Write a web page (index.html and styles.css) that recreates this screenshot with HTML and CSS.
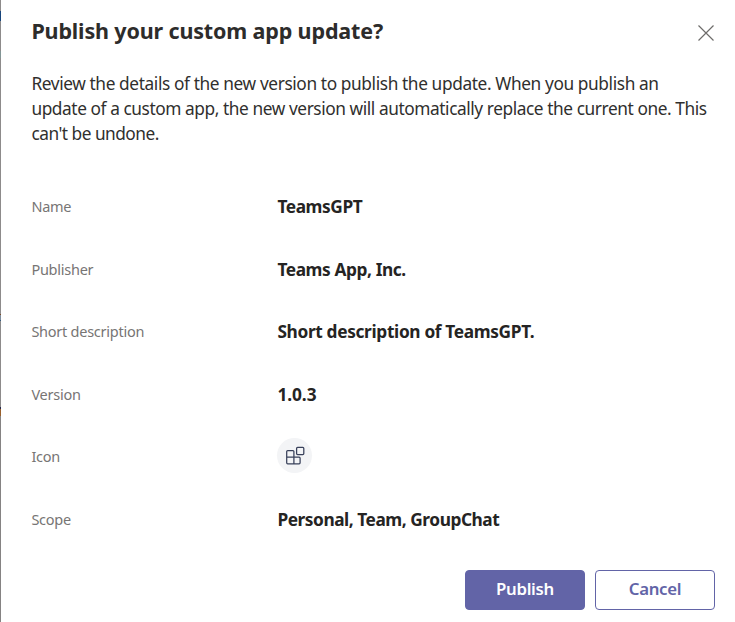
FILE: index.html
```html
<!DOCTYPE html>
<html lang="en">
<head>
<meta charset="utf-8">
<title>Publish your custom app update?</title>
<link rel="stylesheet" href="styles.css">
</head>
<body>
<main class="dialog">
  <header class="header">
    <h1 class="title">Publish your custom app update?</h1>
    <button class="close" aria-label="Close">
      <svg width="16" height="16" viewBox="0 0 16 16"><path d="M.5.5 15.5 15.5M15.5.5.5 15.5" fill="none" stroke="#6e6c6a" stroke-width="1.2"/></svg>
    </button>
  </header>
  <p class="intro"><span class="l1">Review the details of the new version to publish the update. When you publish an</span><br><span class="l2">update of a custom app, the new version will automatically replace the current one. This</span><br><span class="l3">can't be undone.</span></p>
  <dl class="details">
    <div class="row"><dt>Name</dt><dd>TeamsGPT</dd></div>
    <div class="row"><dt>Publisher</dt><dd>Teams App, Inc.</dd></div>
    <div class="row"><dt>Short description</dt><dd class="v-desc">Short description of TeamsGPT.</dd></div>
    <div class="row"><dt>Version</dt><dd class="v-version">1.0.3</dd></div>
    <div class="row"><dt>Icon</dt><dd><span class="app-icon">
      <svg width="20" height="20" viewBox="0 0 20 20" fill="none" stroke="#38405a" stroke-width="1.25"><path d="M8.9 11.2V5.6a1 1 0 0 0-1-1H2.7a1 1 0 0 0-1 1v11.2a1 1 0 0 0 1 1h11.4a1 1 0 0 0 1-1v-4.6a1 1 0 0 0-1-1H1.7M8.9 11.2v6.6"/><rect x="11.6" y="1.4" width="7.2" height="7.2" rx="1"/></svg>
    </span></dd></div>
    <div class="row"><dt>Scope</dt><dd class="v-scope">Personal, Team, GroupChat</dd></div>
  </dl>
  <footer class="actions">
    <button class="btn primary">Publish</button>
    <button class="btn">Cancel</button>
  </footer>
</main>
</body>
</html>
```
FILE: styles.css
```css
* { box-sizing: border-box; }
body { margin: 0; background: #fff; font-family: "Noto Sans", "Open Sans", sans-serif; }
.dialog {
  width: 735px; height: 622px; padding: 0 20px 0 31.4px; overflow: hidden;
  display: flex; flex-direction: column; color: #252423;
  background: linear-gradient(#8d8b8b 0 11px, #17457c 11px 21px, #8d8b8b 21px 51px, #829595 51px 58px, #8d8b8b 58px 314px, #7a4a27 314px 315px, #7c8b9c 315px 320px, #35597c 320px 321px, #8d8b8b 321px 407px, #26284a 407px 409px, #99602c 409px 416px, #858383 416px) 0 0 / 1px 100% no-repeat #fff;
}
.header { display: flex; justify-content: space-between; height: 71px; }
.title { margin: 16px 0 0; font-size: 21.5px; line-height: 30px; font-weight: 700; letter-spacing: -.15px; white-space: nowrap; color: #2d2c2b; }
.close { width: 18px; height: 18px; margin-top: 24px; padding: 1px; border: 0; background: none; }
.close svg { display: block; }
.intro { margin: 0; height: 116px; font-size: 17.3px; line-height: 25px; white-space: nowrap; color: #302f2e; }
.l1 { letter-spacing: -.39px; }
.l2 { letter-spacing: -.425px; }
.l3 { letter-spacing: -.5px; }
.details { margin: 0; height: 383px; }
.row { display: grid; grid-template-columns: 246px 1fr; height: 62.5px; line-height: 40px; }
dt { font-size: 14.5px; line-height: 39px; letter-spacing: -.25px; color: #777574; }
dd { margin: 0; font-size: 17.3px; font-weight: 700; letter-spacing: -.4px; white-space: nowrap; }
.v-desc { letter-spacing: -.34px; }
.v-version { letter-spacing: -.05px; }
.v-scope { letter-spacing: -.45px; }
.app-icon { display: flex; align-items: center; justify-content: center; width: 35px; height: 35px; margin-top: 1px; border-radius: 50%; background: #f3f4f6; }
.actions { display: flex; justify-content: flex-end; gap: 10px; }
.btn { width: 120px; height: 40px; padding: 0 0 2px; border: 1px solid #6264a7; border-radius: 4px; background: #fff; color: #6264a7; font: 600 16.8px/36px "Noto Sans", sans-serif; letter-spacing: -.3px; }
.primary { background: #6264a7; color: #fff; }
```
